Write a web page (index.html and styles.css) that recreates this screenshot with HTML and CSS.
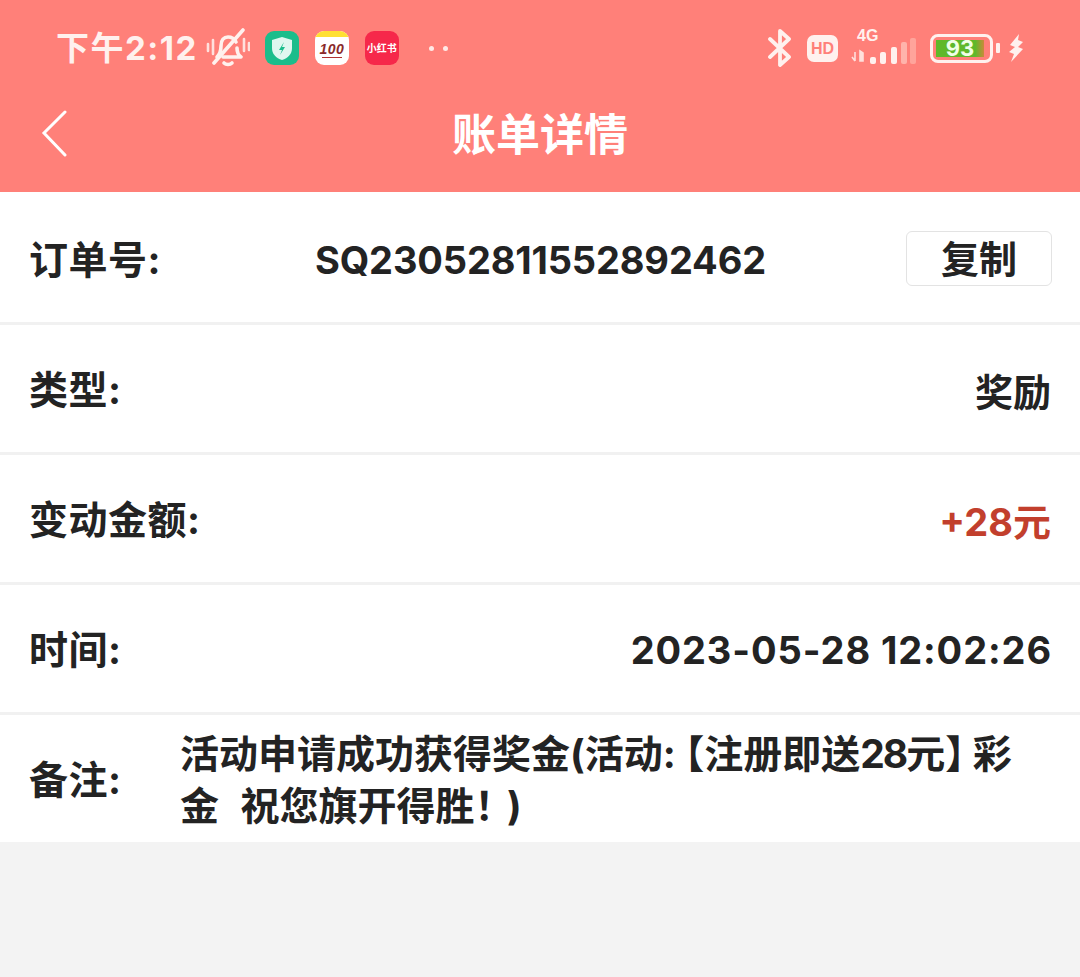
FILE: index.html
```html
<!DOCTYPE html>
<html lang="zh-CN">
<head>
<meta charset="utf-8">
<title>账单详情</title>
<link rel="stylesheet" href="styles.css">
</head>
<body>
<header class="top">
  <div class="status">
    <div class="status-left">
      <span class="time">下午2:12</span>
      <svg class="ic-bell" viewBox="0 0 44 40" fill="none" stroke="#fff1ee" stroke-width="3.6" stroke-linecap="round" stroke-linejoin="round">
        <path d="M2 16v7M7 12v14M38 11v12M43 15v7" stroke-width="2.6" opacity=".85"/>
        <path d="M11 29c3-3 4-6 4-11 0-6 3-9 7-9 3 0 6 1 8 5M31 20c0 4 1 7 4 9H17"/>
        <path d="M18 35c2 2 6 2 8 0"/>
        <path d="M8 35 37 2"/>
      </svg>
      <span class="app app-green">
        <svg viewBox="0 0 34 34"><path d="M17 6l10 3v8c0 6-4 10-10 12C11 27 7 23 7 17V9z" fill="#dff7ef"/><path d="M19 11l-5 8h3l-2 5 5-8h-3z" fill="#1bbd8b"/></svg>
      </span>
      <span class="app app-note">
        <span class="note-top"></span>
        <span class="note-num">100</span>
        <span class="note-line"></span>
      </span>
      <span class="app app-red">小红书</span>
      <span class="dots"><i></i><i></i></span>
    </div>
    <div class="status-right">
      <svg class="ic-bt" viewBox="0 0 26 38" fill="none" stroke="#fff1ee" stroke-width="3.8" stroke-linejoin="round" stroke-linecap="round">
        <path d="M3 10l19 18-9 8V2l9 8L3 28"/>
      </svg>
      <span class="hd">HD</span>
      <span class="net">
        <span class="net-label">4G</span>
        <svg class="ic-signal" viewBox="0 0 66 26">
          <path d="M4 14v9M1 19l3 4M9 13l3 2v8H9z" fill="#fff1ee" stroke="#fff1ee" stroke-width="1.6" opacity=".85"/>
          <rect x="19" y="19" width="6" height="7" rx="2" fill="#fff1ee"/>
          <rect x="29" y="14" width="6" height="12" rx="2" fill="#fff1ee"/>
          <rect x="40" y="9" width="6" height="17" rx="2" fill="#fff1ee"/>
          <rect x="50" y="4" width="6" height="22" rx="2" fill="#ffb3ab"/>
          <rect x="59" y="0" width="6" height="26" rx="2" fill="#ffa49b"/>
        </svg>
      </span>
      <span class="battery"><span class="bat-fill">93</span></span>
      <span class="bat-tip"></span>
      <svg class="ic-bolt" viewBox="0 0 18 30"><path d="M12 1 3 12l5 2-6 5 5 2-3 8 12-13-5-2 5-5-5-2z" fill="#fff1ee"/></svg>
    </div>
  </div>
  <div class="nav">
    <svg class="ic-back" viewBox="0 0 26 48" fill="none" stroke="#fff" stroke-width="3" stroke-linecap="round"><path d="M24 2 3 23l21 22"/></svg>
    <h1 class="title">账单详情</h1>
  </div>
</header>
<main class="list">
  <div class="row">
    <span class="label">订单号:</span>
    <span class="order">SQ23052811552892462</span>
    <button class="copy">复制</button>
  </div>
  <div class="row">
    <span class="label">类型:</span>
    <span class="value">奖励</span>
  </div>
  <div class="row">
    <span class="label">变动金额:</span>
    <span class="value amount">+28元</span>
  </div>
  <div class="row">
    <span class="label">时间:</span>
    <span class="value datetime">2023-05-28 12:02:26</span>
  </div>
  <div class="row row-note">
    <span class="label label-note">备注:</span>
    <div class="note">
      <div class="note-row"><span>活动申请成功获得奖金(活动:</span><span class="br-open">【</span><span>注册即送</span><span class="num">28</span><span>元</span><span class="br-close">】</span><span>彩</span></div>
      <div class="note-row"><span>金&nbsp;&nbsp;祝您旗开得胜</span><span class="bang">！</span><span>)</span></div>
    </div>
  </div>
</main>
</body>
</html>
```
FILE: styles.css
```css
* { box-sizing: border-box; }
html, body { margin: 0; height: 100%; }
body {
  background: #f3f3f3;
  font-family: "Inter", "Noto Sans CJK SC", sans-serif;
  color: #232323;
}
.top { background: #ff8079; height: 192px; display: flex; flex-direction: column; }
.status {
  height: 96px;
  padding: 0 55px 0 56px;
  display: flex;
  justify-content: space-between;
  align-items: center;
}
.status-left, .status-right { display: flex; align-items: center; }
.time { font: 700 33px/40px "Inter", "Noto Sans CJK SC", sans-serif; color: #fff1ee; letter-spacing: 1.5px; }
.ic-bell { width: 44px; height: 40px; margin-left: 8px; }
.app {
  width: 34px; height: 34px; border-radius: 9px;
  display: flex; align-items: center; justify-content: center;
  position: relative; overflow: hidden;
}
.app svg { width: 34px; height: 34px; }
.app-green { background: #1bbd8b; margin-left: 15px; }
.app-note { background: #fff; margin-left: 16px; }
.note-top { position: absolute; left: 0; top: 0; right: 0; height: 6px; background: #ffe033; }
.note-num { font: italic 700 14px/16px "Liberation Sans", sans-serif; color: #8a2a2a; margin-top: 1px; letter-spacing: .5px; }
.note-line { position: absolute; left: 7px; right: 7px; bottom: 7px; height: 1.5px; background: #b03030; }
.app-red { background: #f6284a; margin-left: 16px; color: #fff; font: 700 10px/34px "Noto Sans CJK SC", sans-serif; white-space: nowrap; }
.dots { display: flex; gap: 9px; margin-left: 30px; }
.dots i { width: 5px; height: 5px; border-radius: 50%; background: #ffe9e6; }
.ic-bt { width: 26px; height: 38px; }
.hd {
  margin-left: 14px; width: 31px; height: 27px; border-radius: 7px;
  background: #fff1ee; color: #ff8079;
  font: 700 16px/27px "Liberation Sans", sans-serif; text-align: center;
}
.net { margin-left: 13px; width: 66px; height: 36px; position: relative; display: block; }
.net-label { position: absolute; left: 6px; top: -3px; font: 700 16px/17px "Liberation Sans", sans-serif; color: #fff1ee; }
.ic-signal { position: absolute; left: 0; bottom: 0; width: 66px; height: 30px; }
.battery {
  margin-left: 13px; width: 63px; height: 29px; border: 3px solid #fff1ee; border-radius: 8px;
  padding: 3px 6px 3px 3px; display: block;
}
.bat-fill {
  display: block; height: 17px; background: linear-gradient(90deg, #5fb82a 0, #5fb82a 82%, #c98a3a 100%);
  color: #f0ffe6; font: 700 22px/17px "Inter", sans-serif; text-align: center;
}
.bat-tip { width: 4px; height: 10px; background: #fff1ee; margin-left: 3px; border-radius: 1px; }
.ic-bolt { width: 18px; height: 30px; margin-left: 7px; }
.nav { flex: 1; position: relative; display: flex; align-items: center; justify-content: center; padding-bottom: 25px; }
.ic-back { position: absolute; left: 41px; top: 14px; width: 26px; height: 48px; }
.title { margin: 0; color: #fff; font: 700 44px/56px "Noto Sans CJK SC", sans-serif; }
.list { background: #fff; padding-top: 3px; }
.row {
  height: 130px;
  padding: 2px 29px 0;
  display: flex;
  align-items: center;
  justify-content: space-between;
  border-bottom: 3px solid #f1f1f1;
  font-size: 38px;
  font-weight: 700;
}
.label { font: 700 39px/52px "Inter", "Noto Sans CJK SC", sans-serif; white-space: nowrap; letter-spacing: .5px; }
.value { white-space: nowrap; }
.datetime { letter-spacing: .9px; margin-right: -1px; }
.order { white-space: nowrap; position: absolute; left: 315px; letter-spacing: -.15px; }
.amount { color: #c23f2d; }
.copy {
  margin-right: -1px; margin-bottom: 2px;
  width: 146px; height: 55px; background: #fff; border: 1px solid #e3e3e3; border-radius: 6px;
  font: 700 38px/50px "Noto Sans CJK SC", sans-serif; color: #232323; padding: 0 0 3px;
}
.row-note { border-bottom: 0; height: 127px; justify-content: flex-start; align-items: center; }
.label-note { width: 151px; flex: none; }
.note { font: 700 39px/52px "Inter", "Noto Sans CJK SC", sans-serif; word-spacing: 1.5px; }
.note-row { white-space: nowrap; }
.br-open, .br-close, .bang { font-feature-settings: "halt"; }
.br-open { margin-left: 9px; }
.br-close { margin-right: 8px; }
.bang { margin-right: 13px; }
.num { letter-spacing: -2px; }
```
